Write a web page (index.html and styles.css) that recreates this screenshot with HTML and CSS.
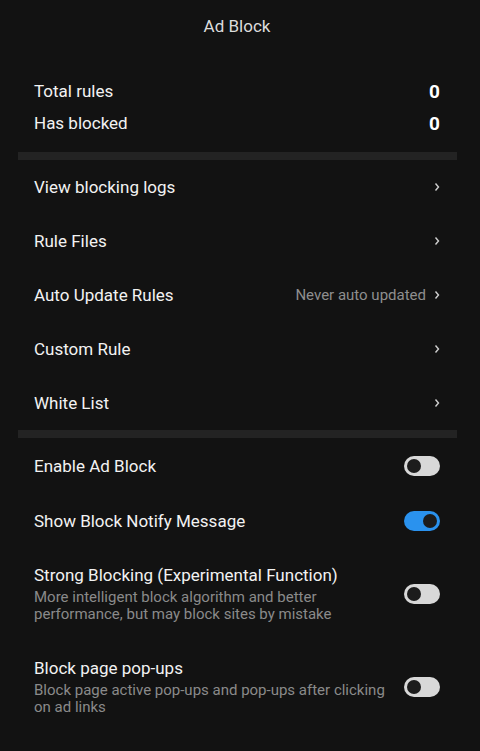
FILE: index.html
```html
<!DOCTYPE html>
<html lang="en">
<head>
    <meta charset="UTF-8">
    <meta name="viewport" content="width=device-width, initial-scale=1.0">
    <link rel="stylesheet" href="styles.css">
    <title>Ad Block</title>
</head>
<body>
    <header class="title-bar">Ad Block</header>

    <section class="stats">
        <div class="stat-row">
            <span>Total rules</span>
            <span class="stat-value">0</span>
        </div>
        <div class="stat-row">
            <span>Has blocked</span>
            <span class="stat-value">0</span>
        </div>
    </section>

    <div class="divider"></div>

    <section class="links">
        <div class="link-row">
            <span class="label">View blocking logs</span>
            <svg class="chevron" width="6" height="10" viewBox="0 0 6 10"><path d="M1.5 1.5L4.5 5L1.5 8.5"/></svg>
        </div>
        <div class="link-row">
            <span class="label">Rule Files</span>
            <svg class="chevron" width="6" height="10" viewBox="0 0 6 10"><path d="M1.5 1.5L4.5 5L1.5 8.5"/></svg>
        </div>
        <div class="link-row">
            <span class="label">Auto Update Rules</span>
            <span class="hint">Never auto updated</span>
            <svg class="chevron" width="6" height="10" viewBox="0 0 6 10"><path d="M1.5 1.5L4.5 5L1.5 8.5"/></svg>
        </div>
        <div class="link-row">
            <span class="label">Custom Rule</span>
            <svg class="chevron" width="6" height="10" viewBox="0 0 6 10"><path d="M1.5 1.5L4.5 5L1.5 8.5"/></svg>
        </div>
        <div class="link-row">
            <span class="label">White List</span>
            <svg class="chevron" width="6" height="10" viewBox="0 0 6 10"><path d="M1.5 1.5L4.5 5L1.5 8.5"/></svg>
        </div>
    </section>

    <div class="divider"></div>

    <section class="switches">
        <div class="switch-row">
            <span class="label">Enable Ad Block</span>
            <span class="toggle"></span>
        </div>
        <div class="switch-row">
            <span class="label">Show Block Notify Message</span>
            <span class="toggle on"></span>
        </div>
        <div class="switch-row tall">
            <div class="text">
                <div class="label">Strong Blocking (Experimental Function)</div>
                <div class="desc">More intelligent block algorithm and better performance, but may block sites by mistake</div>
            </div>
            <span class="toggle"></span>
        </div>
        <div class="switch-row tall">
            <div class="text">
                <div class="label">Block page pop-ups</div>
                <div class="desc">Block page active pop-ups and pop-ups after clicking on ad links</div>
            </div>
            <span class="toggle"></span>
        </div>
    </section>
</body>
</html>
```

FILE: styles.css
```css
body {
    font-family: Roboto, "Noto Sans", sans-serif;
    background-color: #121212;
    color: #f2f2f2;
    margin: 0;
    padding: 0;
}

.title-bar {
    height: 52px;
    display: flex;
    align-items: center;
    justify-content: center;
    padding-right: 6px;
    font-size: 17px;
    color: #dcdcdc;
}

.stats {
    padding: 23px 40px 13px 34px;
    font-size: 17px;
}

.stat-row {
    height: 32px;
    display: flex;
    align-items: center;
    justify-content: space-between;
}

.stat-value {
    font-weight: bold;
    font-size: 19px;
    color: #fff;
}

.divider {
    height: 8px;
    margin: 0 23px 0 18px;
    background-color: #232323;
}

.link-row {
    height: 54px;
    display: flex;
    align-items: center;
    padding: 0 40px 0 34px;
}

.label {
    font-size: 17px;
    color: #f2f2f2;
}

.link-row .label {
    flex: 1;
}

.hint {
    font-size: 15px;
    color: #8e8e8e;
    margin-right: 8px;
}

.chevron {
    fill: none;
    stroke: #cfcfcf;
    stroke-width: 1.4;
}

.switch-row {
    height: 55px;
    display: flex;
    align-items: center;
    justify-content: space-between;
    padding: 0 40px 0 34px;
}

.switch-row.tall {
    height: auto;
    padding-top: 17px;
    padding-bottom: 18px;
}

.text {
    flex: 1;
    max-width: 352px;
}

.text .label {
    line-height: 20px;
    margin-bottom: 4px;
}

.desc {
    font-size: 15px;
    line-height: 17px;
    color: #8a8a8a;
}

.toggle {
    position: relative;
    width: 36px;
    height: 20px;
    border-radius: 10px;
    background-color: #d8d8d8;
    flex-shrink: 0;
}

.toggle::after {
    content: "";
    position: absolute;
    top: 3px;
    left: 3px;
    width: 14px;
    height: 14px;
    border-radius: 50%;
    background-color: #1c1c1c;
}

.toggle.on {
    background-color: #2a92ee;
}

.toggle.on::after {
    left: 19px;
}
```
